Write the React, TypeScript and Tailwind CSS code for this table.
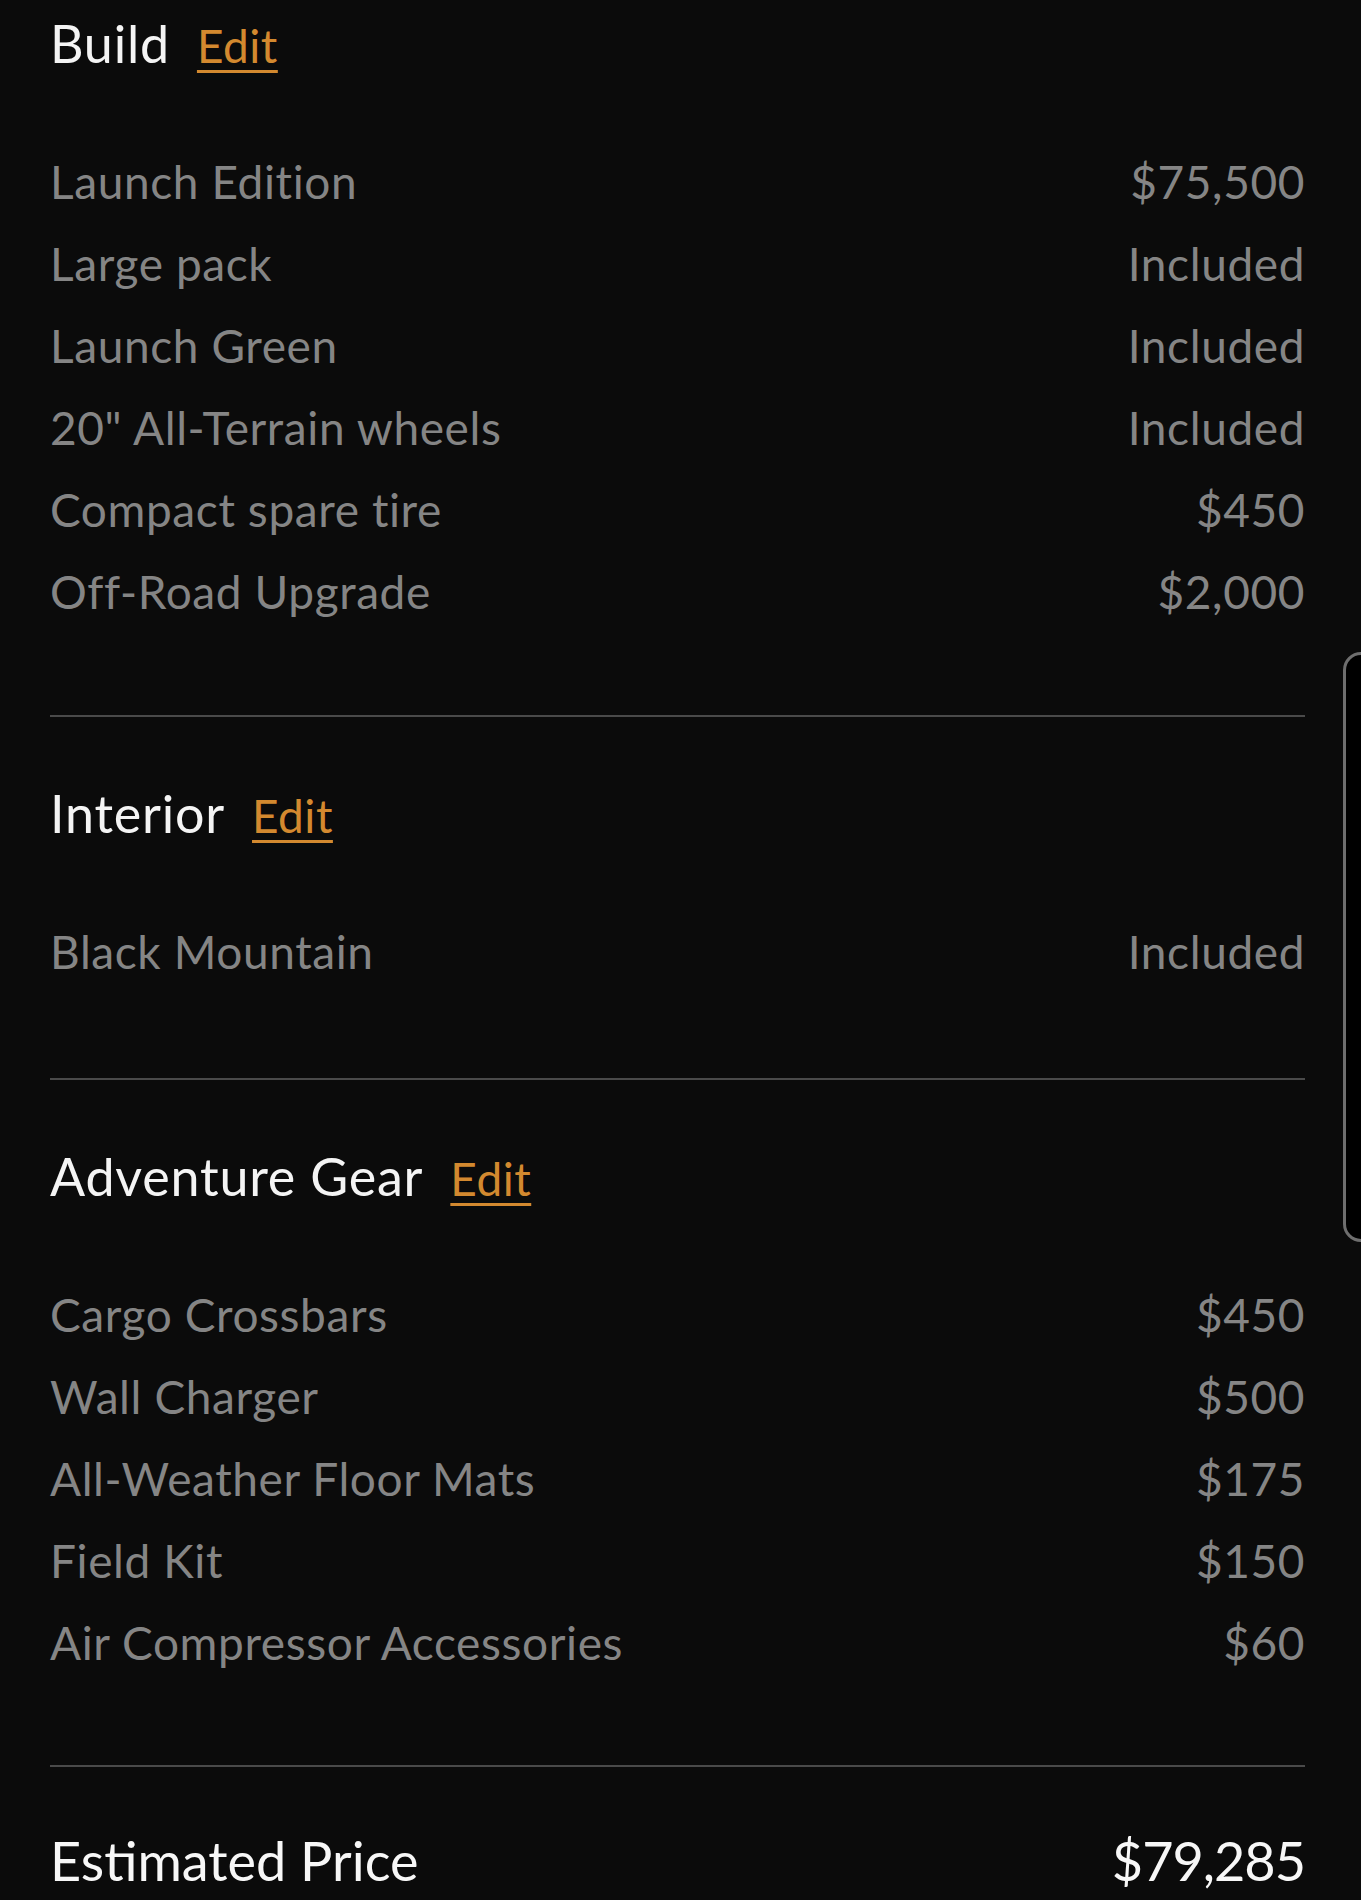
const build = [
  ["Launch Edition", "$75,500"],
  ["Large pack", "Included"],
  ["Launch Green", "Included"],
  ['20" All-Terrain wheels', "Included"],
  ["Compact spare tire", "$450"],
  ["Off-Road Upgrade", "$2,000"],
];

const interior = [["Black Mountain", "Included"]];

const gear = [
  ["Cargo Crossbars", "$450"],
  ["Wall Charger", "$500"],
  ["All-Weather Floor Mats", "$175"],
  ["Field Kit", "$150"],
  ["Air Compressor Accessories", "$60"],
];

const Section = ({ title, items }: { title: string; items: string[][] }) => (
  <div>
    <div className="flex items-baseline gap-[27px] h-[60px] leading-[60px]">
      <h2 className="text-[52px] tracking-[0.8px] text-[#f4f4f4]">{title}</h2>
      <a className="text-[46px] tracking-[0.5px] text-[#d3892f] underline decoration-[3px] underline-offset-[7px]">
        Edit
      </a>
    </div>
    <ul className="mt-[68px]">
      {items.map(([name, price]) => (
        <li
          key={name}
          className="flex justify-between h-[82px] leading-[82px] text-[46px] tracking-[0.6px] text-[#858585]"
        >
          <span>{name}</span>
          <span>{price}</span>
        </li>
      ))}
    </ul>
  </div>
);

export default function App() {
  return (
    <div
      className="relative w-full h-[1900px] overflow-hidden bg-[#0b0b0b]"
      style={{ fontFamily: "Lato, 'Open Sans', sans-serif" }}
    >
      <div className="pl-[50px] pr-[56px] pt-[13px]">
        <Section title="Build" items={build} />
        <div className="mt-[82px] h-[2px] bg-[#4a4a4a]" />
        <div className="mt-[66px]">
          <Section title="Interior" items={interior} />
        </div>
        <div className="mt-[85px] h-[2px] bg-[#4a4a4a]" />
        <div className="mt-[66px]">
          <Section title="Adventure Gear" items={gear} />
        </div>
        <div className="mt-[81px] h-[2px] bg-[#4a4a4a]" />
        <div className="mt-[64px] flex justify-between h-[60px] leading-[60px] text-[54px] text-[#f7f7f7]">
          <span>Estimated Price</span>
          <span className="tracking-[-1px]">$79,285</span>
        </div>
      </div>
      {/* scroll thumb on the right edge */}
      <div className="absolute left-[1343px] top-[652px] w-[40px] h-[590px] rounded-l-[18px] border-[3px] border-[#6e6e6e] bg-black" />
    </div>
  );
}
